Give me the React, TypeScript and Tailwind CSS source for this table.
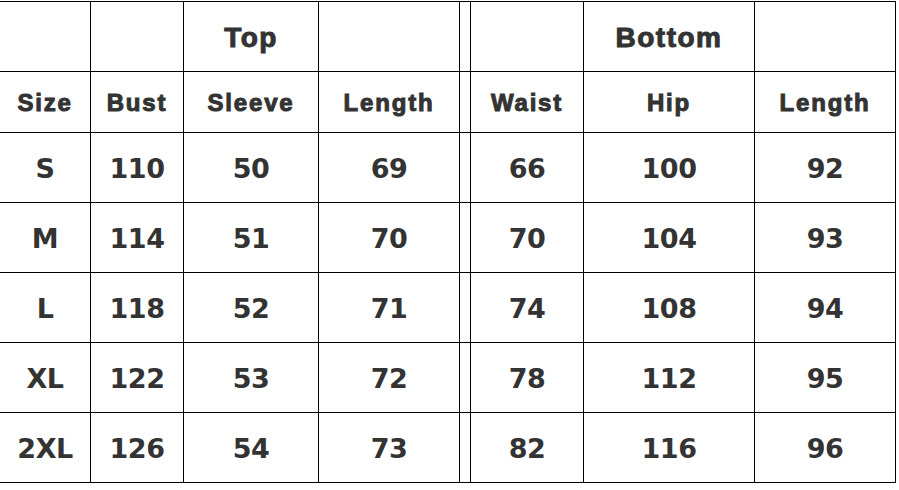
const cols = ['w-[90px]', 'w-[92px]', 'w-[134px]', 'w-[140px]', 'w-[10px]', 'w-[112px]', 'w-[170px]', 'w-[140px]'];

const rows = [
  ['S', '110', '50', '69', '', '66', '100', '92'],
  ['M', '114', '51', '70', '', '70', '104', '93'],
  ['L', '118', '52', '71', '', '74', '108', '94'],
  ['XL', '122', '53', '72', '', '78', '112', '95'],
  ['2XL', '126', '54', '73', '', '82', '116', '96'],
];

const heading = ['', '', 'Top', '', '', '', 'Bottom', ''];
const labels = ['Size', 'Bust', 'Sleeve', 'Length', '', 'Waist', 'Hip', 'Length'];

const headFont = "font-['Liberation_Sans',Arial,sans-serif] font-bold text-[#333] [-webkit-text-stroke:1px_#333]";
const numFont = "font-['DejaVu_Sans',Verdana,sans-serif] font-bold text-[#333]";

export default function App() {
  return (
    <div className="w-[899px] h-[490px] bg-white overflow-hidden pt-px">
      <div className="inline-flex flex-col gap-px bg-black pt-px pr-px pb-px">
        <div className="flex gap-px h-[69px]">
          {heading.map((t, i) => (
            <div key={i} className={`${cols[i]} bg-white flex items-center justify-center pt-[3px] ${headFont} text-[28px] tracking-[1.5px]`}>
              {t}
            </div>
          ))}
        </div>
        <div className="flex gap-px h-[60px]">
          {labels.map((t, i) => (
            <div key={i} className={`${cols[i]} bg-white flex items-center justify-center pt-[2px] ${headFont} text-[24px] tracking-[1.8px]`}>
              {t}
            </div>
          ))}
        </div>
        {rows.map((r, ri) => (
          <div key={ri} className="flex gap-px h-[69px]">
            {r.map((t, i) => (
              <div key={i} className={`${cols[i]} bg-white flex items-center justify-center pt-[3px] ${numFont} text-[27px] tracking-[-0.5px]`}>
                {t}
              </div>
            ))}
          </div>
        ))}
      </div>
    </div>
  );
}
